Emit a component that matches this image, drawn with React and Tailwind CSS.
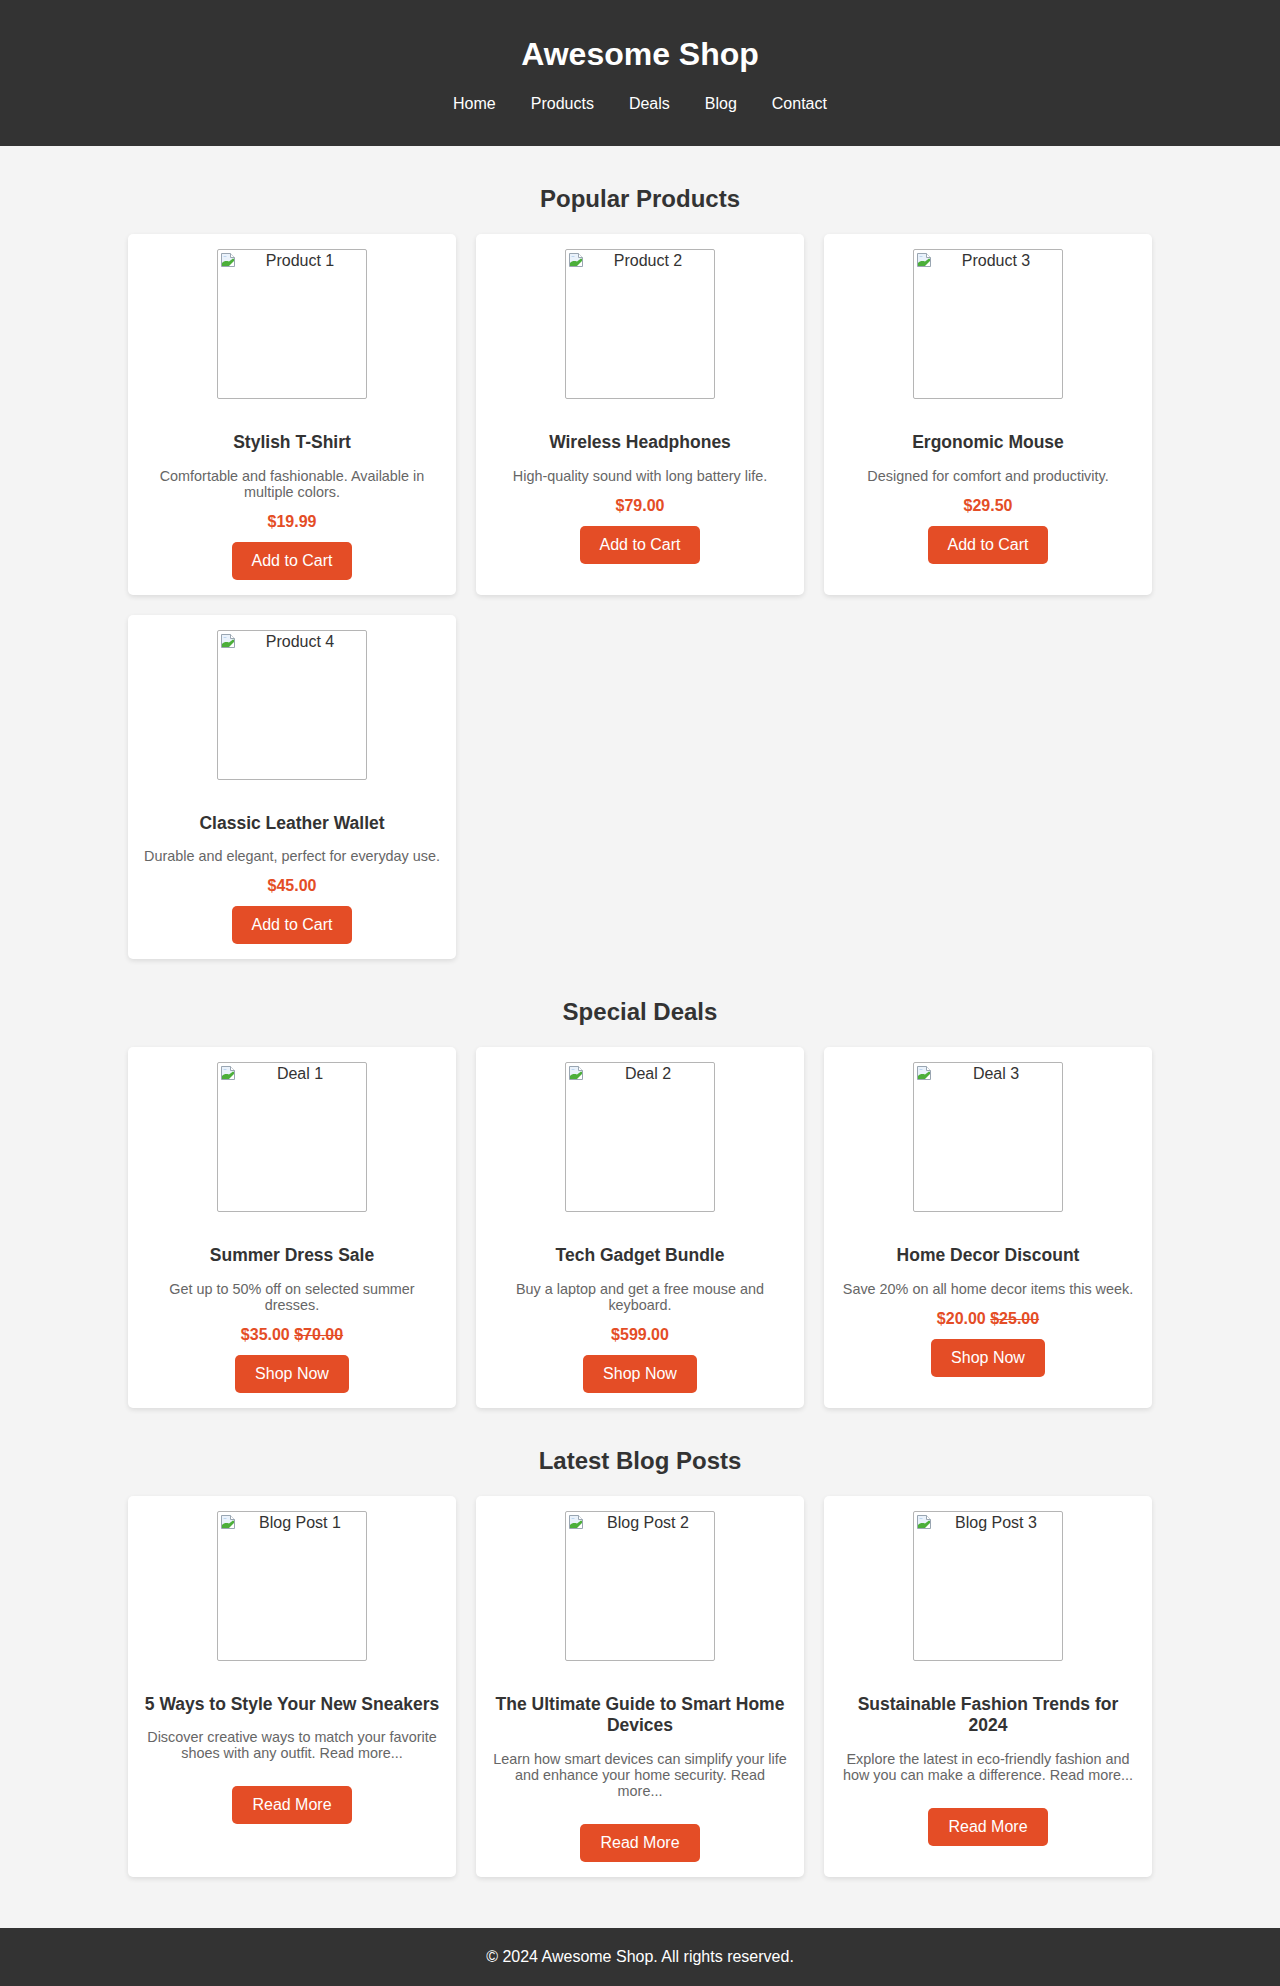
import React from "react";

const products = [
  { alt: "Product 1", title: "Stylish T-Shirt", desc: "Comfortable and fashionable. Available in multiple colors.", price: "$19.99" },
  { alt: "Product 2", title: "Wireless Headphones", desc: "High-quality sound with long battery life.", price: "$79.00" },
  { alt: "Product 3", title: "Ergonomic Mouse", desc: "Designed for comfort and productivity.", price: "$29.50" },
  { alt: "Product 4", title: "Classic Leather Wallet", desc: "Durable and elegant, perfect for everyday use.", price: "$45.00" },
];

const deals = [
  { alt: "Deal 1", title: "Summer Dress Sale", desc: "Get up to 50% off on selected summer dresses.", price: "$35.00", old: "$70.00" },
  { alt: "Deal 2", title: "Tech Gadget Bundle", desc: "Buy a laptop and get a free mouse and keyboard.", price: "$599.00" },
  { alt: "Deal 3", title: "Home Decor Discount", desc: "Save 20% on all home decor items this week.", price: "$20.00", old: "$25.00" },
];

const posts = [
  { alt: "Blog Post 1", title: "5 Ways to Style Your New Sneakers", desc: "Discover creative ways to match your favorite shoes with any outfit. Read more..." },
  { alt: "Blog Post 2", title: "The Ultimate Guide to Smart Home Devices", desc: "Learn how smart devices can simplify your life and enhance your home security. Read more..." },
  { alt: "Blog Post 3", title: "Sustainable Fashion Trends for 2024", desc: "Explore the latest in eco-friendly fashion and how you can make a difference. Read more..." },
];

function BrokenIcon() {
  return (
    <svg width="16" height="16" viewBox="0 0 16 16" className="shrink-0 mt-[2px] ml-[2px]">
      <path d="M1.5 1.5 H10.5 L14.5 5.5 V14.5 H1.5 Z" fill="#eaf2fb" stroke="#9aa6b2" strokeWidth="1" />
      <path d="M10.5 1.5 V5.5 H14.5" fill="#ffffff" stroke="#9aa6b2" strokeWidth="1" />
      <path d="M2 14 L2 11 C4 9 6 8.5 9 9.5 L13 6.5 L14 7 V14 Z" fill="#4caf3a" />
      <path d="M9 14 L14 9 V14 Z" fill="#ffffff" />
      <path d="M3 5 C4 3.6 6 3.6 7 5 Z" fill="#b8d3ee" />
    </svg>
  );
}

function Img({ alt }) {
  return (
    <div className="w-[150px] h-[150px] border border-[#b5b5b5] rounded-[2px] flex items-start bg-white">
      <BrokenIcon />
      <div className="flex-1 text-center text-[16px] leading-[18px] text-[#333] pr-[2px] mt-[2px]">{alt}</div>
    </div>
  );
}

function Button({ children, mt }) {
  return (
    <button className={`${mt} h-[38px] px-[20px] bg-[#e44d26] text-white text-[16px] leading-[18px] rounded-[5px]`}>
      {children}
    </button>
  );
}

function Card({ item, kind }) {
  return (
    <div className="bg-white rounded-[5px] shadow-[0_2px_5px_rgba(0,0,0,0.1)] p-[15px] flex flex-col items-center text-center">
      <Img alt={item.alt} />
      <h3 className="mt-[33px] text-[17.5px] leading-[21.5px] font-bold text-[#333]">{item.title}</h3>
      <p className="mt-[14px] text-[14.4px] leading-[16px] text-[#666]">{item.desc}</p>
      {kind === "blog" ? (
        <Button mt="mt-[25px]">Read More</Button>
      ) : (
        <>
          <p className="mt-[13px] text-[16px] leading-[18px] font-bold text-[#e44d26]">
            {item.price}
            {item.old && (
              <>
                {" "}
                <span className="line-through">{item.old}</span>
              </>
            )}
          </p>
          <Button mt="mt-[11px]">{kind === "deal" ? "Shop Now" : "Add to Cart"}</Button>
        </>
      )}
    </div>
  );
}

function Section({ title, items, kind, last }) {
  return (
    <section className={last ? "" : "mb-[39px]"}>
      <h2 className="text-[24px] leading-[28px] font-bold text-[#333] text-center mb-[21px]">{title}</h2>
      <div className="grid grid-cols-3 gap-[20px]">
        {items.map((it) => (
          <Card key={it.alt} item={it} kind={kind} />
        ))}
      </div>
    </section>
  );
}

export default function App() {
  return (
    <div className="min-h-[1986px] bg-[#f4f4f4] flex flex-col" style={{ fontFamily: '"Liberation Sans", Arial, sans-serif' }}>
      <header className="bg-[#333] text-white text-center pt-[36px] pb-[33px]">
        <h1 className="text-[32px] leading-[37px] font-bold">Awesome Shop</h1>
        <nav className="mt-[22px] flex justify-center gap-[35px] text-[16px] leading-[18px]">
          <a>Home</a>
          <a>Products</a>
          <a>Deals</a>
          <a>Blog</a>
          <a>Contact</a>
        </nav>
      </header>
      <main className="w-[1024px] mx-auto pt-[39px] pb-[50px] flex-1">
        <Section title="Popular Products" items={products} kind="product" />
        <Section title="Special Deals" items={deals} kind="deal" />
        <Section title="Latest Blog Posts" items={posts} kind="blog" last />
      </main>
      <footer className="bg-[#333] text-white text-center text-[16px] leading-[18px] py-[20px]">
        © 2024 Awesome Shop. All rights reserved.
      </footer>
    </div>
  );
}
